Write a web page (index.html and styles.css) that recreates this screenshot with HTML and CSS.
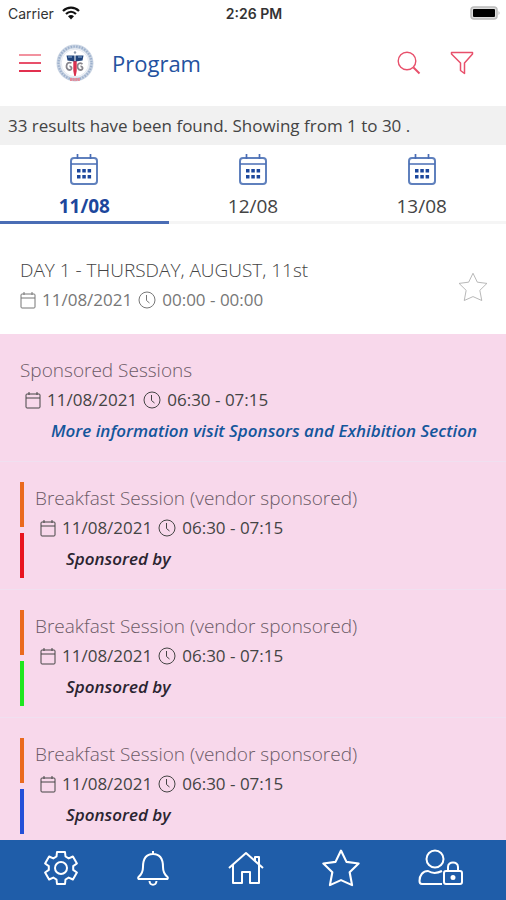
FILE: index.html
```html
<!DOCTYPE html>
<html lang="en">
<head>
  <meta charset="UTF-8" />
  <meta name="viewport" content="width=device-width, initial-scale=1.0" />
  <title>Program</title>
  <link rel="stylesheet" href="styles.css">
</head>
<body>
  <!-- shared icons -->
  <svg class="icon-defs" aria-hidden="true">
    <symbol id="icon-calendar-days" viewBox="0 0 30 32">
      <rect x="2" y="5" width="26" height="26" rx="3" stroke="#5f80bd" stroke-width="2" />
      <path d="M2 11h26M8.500 1v5M21.500 1v5" stroke="#4a6db5" stroke-width="1.700" />
      <path d="M8 16h3.500v3.500H8zM13.300 16h3.500v3.500h-3.500zM18.600 16h3.500v3.500h-3.500zM8 22h3.500v3.500H8zM13.300 22h3.500v3.500h-3.500zM18.600 22h3.500v3.500h-3.500z" fill="currentColor" stroke="none" />
    </symbol>
    <symbol id="icon-calendar" viewBox="0 0 16 18">
      <rect x="1" y="3" width="14" height="14" rx="1" />
      <path d="M1 7h14M4 1v3M12 1v3" />
    </symbol>
    <symbol id="icon-clock" viewBox="0 0 18 18">
      <circle cx="9" cy="9" r="8" />
      <path d="M8.500 4v5.500l3 2.500" />
    </symbol>
    <symbol id="icon-star" viewBox="0 0 36 36">
      <path d="M18 1.500l5.200 10.700 11.500 1.500-8.500 8.300 2.300 12.200L18 29.500 7.500 34.200 9.800 22 1.300 13.700l11.500-1.500z" />
    </symbol>
  </svg>

  <div class="status-bar">
    <div class="carrier">
      <span>Carrier</span>
      <svg class="wifi" viewBox="0 0 18 14" width="18" height="14">
        <path d="M1 5c4.500-4.500 11.500-4.500 16 0M4 8c3-3 7-3 10 0" fill="none" stroke="#111" stroke-width="2.200" />
        <path d="M6 10.300c2-1.800 4-1.800 6 0L9 13.500z" fill="#111" />
      </svg>
    </div>
    <div class="clock">2:26 PM</div>
    <div class="battery">
      <svg viewBox="0 0 30 14" width="30" height="14">
        <rect x="1" y="1" width="26" height="12" rx="3" fill="#ddd" stroke="#bbb" stroke-width="1.500" />
        <rect x="3" y="3" width="22" height="8" rx="1" fill="#000" />
        <path d="M28.500 5c1.500 1 1.500 3 0 4z" fill="#bbb" />
      </svg>
    </div>
  </div>

  <header class="header">
    <button type="button" class="icon-btn" aria-label="Menu">
      <svg class="icon" viewBox="0 0 22 20" width="22" height="20">
        <path d="M0 2h22" stroke="#f2929f" stroke-width="2" />
        <path d="M0 10h22" stroke="#e8506b" stroke-width="2" />
        <path d="M0 18h22" stroke="#e2304f" stroke-width="2" />
      </svg>
    </button>
    <svg class="logo" viewBox="0 0 38 38" width="38" height="38">
      <circle cx="19" cy="19" r="16.500" fill="#fff" stroke="#c9d4e3" stroke-width="4" />
      <circle cx="19" cy="19" r="16.500" fill="none" stroke="#9db0cc" stroke-width="2.200" stroke-dasharray="1.500 1.300" />
      <circle cx="19" cy="19" r="13.800" fill="#fff" stroke="#e3e8f0" stroke-width="1" />
      <circle cx="19" cy="8.500" r="1.200" fill="#8e9bb0" />
      <path d="M15.500 19c-6-2.500-6.500 7-2 7 3 0 2.500-4 0-3.500M26.500 20c-6-3.500-6.500 6-2 6 3 0 2.500-4 0-3.500" fill="none" stroke="#87858c" stroke-width="1.800" />
      <path d="M17.300 17h3.400v10l-1 5h-1.400l-1-5z" fill="#d9304e" />
      <path d="M10.500 11.500h8v6l-7-1zM19.500 11.500h8l-1 5-7 1z" fill="#20447c" />
      <path d="M12 13h4M22 13h4" stroke="#8fb2d8" stroke-width="1.200" />
      <path d="M14 35.500h10" stroke="#e58b99" stroke-width="3" stroke-dasharray="2 .6" />
    </svg>
    <h1 class="page-title">Program</h1>
    <button type="button" class="icon-btn" aria-label="Search">
      <svg class="icon" viewBox="0 0 24 24" width="24" height="24">
        <circle cx="10" cy="10" r="8.800" stroke-width="1.400" />
        <path d="M16.500 16.500l6 6" stroke-width="2" />
      </svg>
    </button>
    <button type="button" class="icon-btn" aria-label="Filter">
      <svg class="icon" viewBox="0 0 24 24" width="24" height="24">
        <path d="M1.500 1.500h21v1.500l-8 9v10.500l-4-3V12L1.500 3z" stroke-width="1.500" />
      </svg>
    </button>
  </header>

  <p class="results">33 results have been found. Showing from 1 to 30 .</p>

  <nav class="tabs">
    <a href="#" class="tab active">
      <svg class="icon" width="30" height="32"><use href="#icon-calendar-days" /></svg>
      <span>11/08</span>
    </a>
    <a href="#" class="tab">
      <svg class="icon" width="30" height="32"><use href="#icon-calendar-days" /></svg>
      <span>12/08</span>
    </a>
    <a href="#" class="tab">
      <svg class="icon" width="30" height="32"><use href="#icon-calendar-days" /></svg>
      <span>13/08</span>
    </a>
  </nav>

  <main class="program">
    <section class="day">
      <div class="day-info">
        <h2 class="title">DAY 1 - THURSDAY, AUGUST, 11st</h2>
        <div class="meta">
          <svg class="icon" width="16" height="18"><use href="#icon-calendar" /></svg>
          <span>11/08/2021</span>
          <svg class="icon" width="18" height="18"><use href="#icon-clock" /></svg>
          <span>00:00 - 00:00</span>
        </div>
      </div>
      <button type="button" class="icon-btn favorite" aria-label="Add to favorites">
        <svg class="icon" width="30" height="30"><use href="#icon-star" /></svg>
      </button>
    </section>

    <article class="session">
      <div class="session-info">
        <h3 class="title">Sponsored Sessions</h3>
        <div class="meta">
          <svg class="icon" width="16" height="18"><use href="#icon-calendar" /></svg>
          <span>11/08/2021</span>
          <svg class="icon" width="18" height="18"><use href="#icon-clock" /></svg>
          <span>06:30 - 07:15</span>
        </div>
        <p class="note note-blue">More information visit Sponsors and Exhibition Section</p>
      </div>
    </article>

    <article class="session">
      <div class="tracks">
        <span class="track orange"></span>
        <span class="track red"></span>
      </div>
      <div class="session-info">
        <h3 class="title">Breakfast Session (vendor sponsored)</h3>
        <div class="meta">
          <svg class="icon" width="16" height="18"><use href="#icon-calendar" /></svg>
          <span>11/08/2021</span>
          <svg class="icon" width="18" height="18"><use href="#icon-clock" /></svg>
          <span>06:30 - 07:15</span>
        </div>
        <p class="note">Sponsored by</p>
      </div>
    </article>

    <article class="session">
      <div class="tracks">
        <span class="track orange"></span>
        <span class="track green"></span>
      </div>
      <div class="session-info">
        <h3 class="title">Breakfast Session (vendor sponsored)</h3>
        <div class="meta">
          <svg class="icon" width="16" height="18"><use href="#icon-calendar" /></svg>
          <span>11/08/2021</span>
          <svg class="icon" width="18" height="18"><use href="#icon-clock" /></svg>
          <span>06:30 - 07:15</span>
        </div>
        <p class="note">Sponsored by</p>
      </div>
    </article>

    <article class="session">
      <div class="tracks">
        <span class="track orange"></span>
        <span class="track blue"></span>
      </div>
      <div class="session-info">
        <h3 class="title">Breakfast Session (vendor sponsored)</h3>
        <div class="meta">
          <svg class="icon" width="16" height="18"><use href="#icon-calendar" /></svg>
          <span>11/08/2021</span>
          <svg class="icon" width="18" height="18"><use href="#icon-clock" /></svg>
          <span>06:30 - 07:15</span>
        </div>
        <p class="note">Sponsored by</p>
      </div>
    </article>
  </main>

  <nav class="bottom-nav">
    <a href="#" aria-label="Settings">
      <svg class="icon" viewBox="0 0 36 36" width="36" height="36">
        <path d="M14 2L22 2L22.500 6.500L25.700 8.400L29.900 6.500L33.900 13.500L30.200 16.100L30.200 19.900L33.900 22.500L29.900 29.500L25.700 27.600L22.500 29.500L22 34L14 34L13.500 29.500L10.300 27.600L6.100 29.500L2.100 22.500L5.800 19.900L5.800 16.100L2.100 13.500L6.100 6.500L10.300 8.400L13.500 6.500z" />
        <circle cx="18" cy="18" r="6" />
      </svg>
    </a>
    <a href="#" aria-label="Notifications">
      <svg class="icon" viewBox="0 0 32 36" width="32" height="36">
        <path d="M16 1v3M6 17C6 8 10 4 16 4s10 4 10 13c0 6 2 8 4.500 10 .8 1.500 0 2-1 2h-27c-1 0-1.800-.5-1-2C4 25 6 23 6 17zM12.500 31c.5 5 6.500 5 7 0" />
      </svg>
    </a>
    <a href="#" aria-label="Home">
      <svg class="icon" viewBox="0 0 36 36" width="36" height="36">
        <path d="M1 18L18 3l17 15M5 15v18h9V22h8v11h9V7h-4v4" />
      </svg>
    </a>
    <a href="#" aria-label="Favorites">
      <svg class="icon" width="38" height="38"><use href="#icon-star" /></svg>
    </a>
    <a href="#" aria-label="My account">
      <svg class="icon" viewBox="0 0 46 38" width="46" height="38">
        <circle cx="17" cy="10" r="8.500" />
        <path d="M24 35H4c-2 0-2.500-1-2.500-3 0-6 3.500-10 8.500-10 4 2.500 9 2.500 14 0" />
        <rect x="26" y="22" width="18" height="13" rx="2" />
        <path d="M30 22v-4c0-6 10-6 10 0v4" />
        <circle cx="35" cy="28.500" r="1.500" fill="currentColor" />
      </svg>
    </a>
  </nav>
</body>
</html>
```
FILE: styles.css
```css
* {
  box-sizing: border-box;
}

body {
  margin: 0;
  height: 100vh;
  display: flex;
  flex-direction: column;
  overflow: hidden;
  background: #fff;
  color: #444;
  font-family: "Open Sans", sans-serif;
  font-size: 17px;
}

h1, h2, h3, p {
  margin: 0;
}

a {
  color: inherit;
  text-decoration: none;
}

.icon-defs {
  display: none;
}

.icon {
  display: block;
  flex: none;
  fill: none;
  stroke: currentColor;
  stroke-linejoin: round;
}

.icon-btn {
  padding: 0;
  border: none;
  background: none;
  color: #e8506b;
  cursor: pointer;
}

/* status bar */
.status-bar {
  display: grid;
  grid-template-columns: 1fr auto 1fr;
  align-items: center;
  height: 26px;
  flex: none;
  padding: 0 6px 0 8px;
  font-family: Inter, sans-serif;
  font-size: 14px;
  color: #333;
}

.carrier {
  display: flex;
  align-items: center;
  gap: 8px;
}

.clock {
  font-weight: 600;
}

.battery {
  display: flex;
  justify-content: flex-end;
}

/* header */
.header {
  display: flex;
  align-items: center;
  flex: none;
  height: 80px;
  padding: 0 32px 6px 19px;
}

.logo {
  margin: 0 18px 0 15px;
}

.page-title {
  flex: 1;
  font-size: 22px;
  font-weight: 400;
  color: #2452a0;
}

.header .icon-btn + .icon-btn {
  margin-left: 29px;
}

.results {
  flex: none;
  padding: 0 8px;
  background: #f1f1f1;
  line-height: 39px;
}

/* date tabs */
.tabs {
  display: flex;
  flex: none;
}

.tab {
  flex: 1;
  display: flex;
  flex-direction: column;
  align-items: center;
  gap: 7px;
  padding: 8px 0 1px;
  border-bottom: 3px solid #f5f5f5;
  font-size: 19px;
  line-height: 28px;
}

.tab .icon {
  color: #1c479c;
}

.tab.active {
  border-color: #4a6db5;
  color: #1c479c;
  font-weight: 700;
}

/* program list */
.program {
  flex: 1;
  min-height: 0;
  overflow: hidden;
}

.title {
  font-size: 19px;
  font-weight: 300;
  line-height: 32px;
}

.meta {
  display: flex;
  align-items: center;
  gap: 6px;
  line-height: 28px;
}

.day {
  display: flex;
  align-items: center;
  justify-content: space-between;
  min-height: 110px;
  padding: 10px 18px 0 20px;
}

.day .meta {
  color: #777;
}

.favorite {
  margin-top: 6px;
  color: #aaa;
}

.session {
  display: flex;
  min-height: 128px;
  padding: 20px 14px 0 20px;
  background: #f8d8eb;
  border-bottom: 1px solid #f0e0f0;
}

.session .title {
  color: #6b5a66;
}

.session .meta {
  padding-left: 5px;
}

.tracks {
  display: flex;
  flex-direction: column;
  gap: 6px;
  margin-right: 11px;
}

.track {
  width: 4px;
  height: 45px;
}

.orange {
  background: #ea6a1e;
}

.red {
  background: #e8141f;
}

.green {
  background: #1fe61f;
}

.blue {
  background: #2450d8;
}

.note {
  padding-left: 31px;
  font-size: 17px;
  font-style: italic;
  font-weight: 600;
  line-height: 34px;
  color: #2b2430;
}

.note-blue {
  color: #14569b;
}

/* bottom navigation */
.bottom-nav {
  display: flex;
  justify-content: space-between;
  align-items: center;
  flex: none;
  height: 60px;
  padding: 0 42px 4px 43px;
  background: #1f5da9;
  color: #fff;
}

.bottom-nav .icon {
  stroke-width: 2;
}
```
